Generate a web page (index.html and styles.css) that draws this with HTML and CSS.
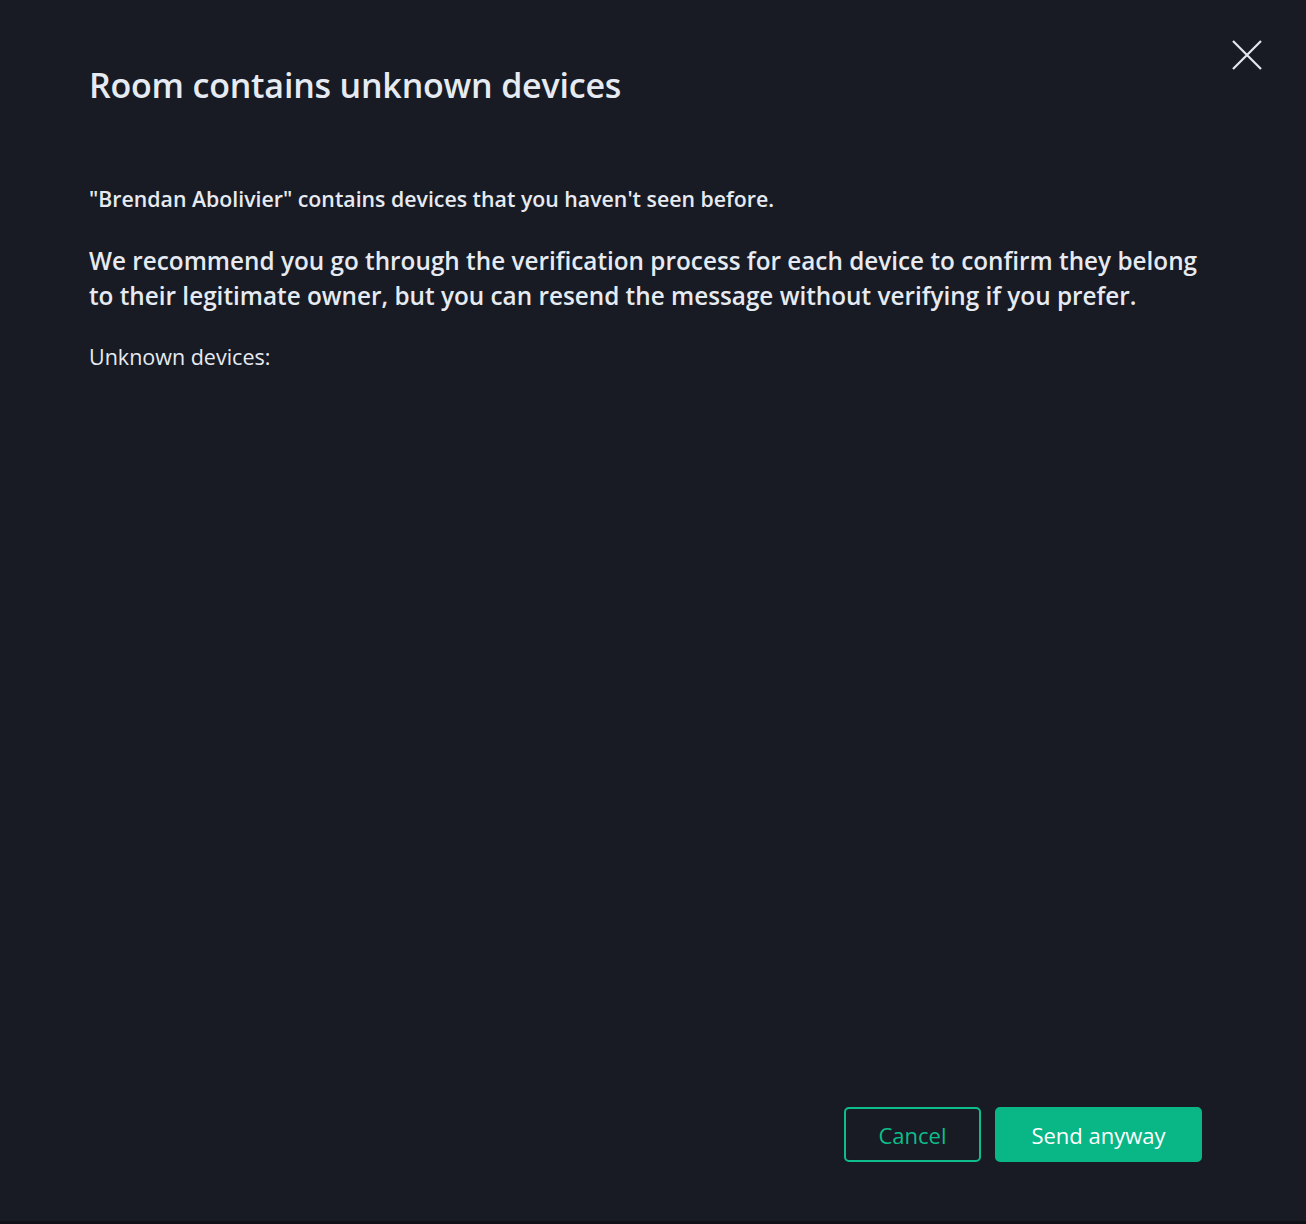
FILE: index.html
```html
<!DOCTYPE html>
<html lang="en">
<head>
<meta charset="utf-8">
<title>Room contains unknown devices</title>
<link rel="stylesheet" href="styles.css">
</head>
<body>
<div class="dialog">
  <header class="dialog-header">
    <h1 class="dialog-title">Room contains unknown devices</h1>
    <button class="close-btn" aria-label="Close">
      <svg viewBox="0 0 30 30" width="30" height="30"><path d="M1 1 L29 29 M29 1 L1 29" stroke="#e3e8f0" stroke-width="2.2" fill="none"/></svg>
    </button>
  </header>
  <div class="dialog-body">
    <p class="intro">"Brendan Abolivier" contains devices that you haven't seen before.</p>
    <p class="recommend">We recommend you go through the verification process for each device to confirm they belong to their legitimate owner, but you can resend the message without verifying if you prefer.</p>
    <p class="unknown">Unknown devices:</p>
  </div>
  <footer class="dialog-footer">
    <button class="btn btn-outline">Cancel</button>
    <button class="btn btn-primary">Send anyway</button>
  </footer>
</div>
<div class="bottom-strip"></div>
</body>
</html>
```
FILE: styles.css
```css
html, body {
  margin: 0;
  padding: 0;
  background: #181b23;
}
body {
  font-family: "Open Sans", "Noto Sans", sans-serif;
  color: #e6eaf2;
}
.dialog {
  height: 1221px;
  box-sizing: border-box;
  padding: 0 104px 59px 89px;
  display: flex;
  flex-direction: column;
}
.dialog-header {
  display: flex;
  align-items: flex-start;
  justify-content: space-between;
  padding-top: 64px;
}
.dialog-title {
  margin: 0;
  font-size: 34px;
  line-height: 42px;
  font-weight: 600;
  letter-spacing: -0.2px;
}
.close-btn {
  background: none;
  border: none;
  padding: 0;
  margin: -24px -60px 0 0;
  width: 30px;
  height: 30px;
  cursor: pointer;
}
.close-btn svg { display: block; }
.dialog-body {
  flex: 1;
  padding-top: 79px;
}
.dialog-body p { margin: 0; }
.intro {
  font-size: 21.3px;
  line-height: 28px;
  font-weight: 600;
}
.recommend {
  margin-top: 30px !important;
  font-size: 24.3px;
  line-height: 35px;
  font-weight: 600;
}
.unknown {
  margin-top: 30px !important;
  font-size: 21.5px;
  line-height: 28px;
  font-weight: 400;
}
.dialog-footer {
  display: flex;
  justify-content: flex-end;
  gap: 14px;
}
.btn {
  height: 55px;
  border-radius: 5px;
  font-family: inherit;
  font-size: 22px;
  box-sizing: border-box;
  cursor: pointer;
}
.btn-outline {
  width: 137px;
  background: transparent;
  border: 2px solid #0dbd8b;
  color: #0dbd8b;
}
.btn-primary {
  width: 207px;
  background: #08b686;
  border: 2px solid #08b686;
  color: #ffffff;
}
.bottom-strip {
  height: 3px;
  background: #0f1116;
}
```
